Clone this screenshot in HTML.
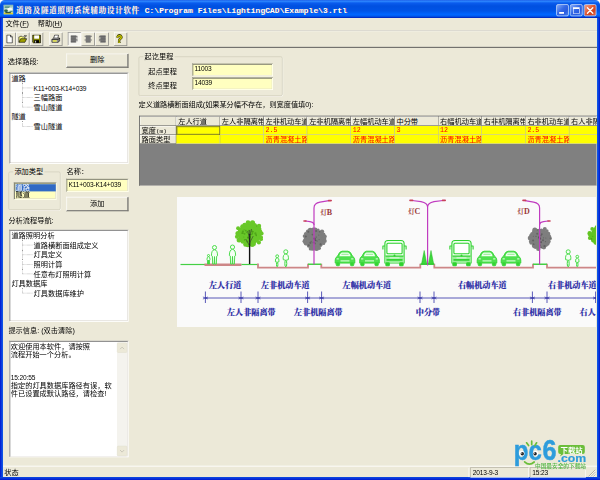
<!DOCTYPE html>
<html lang="zh-CN">
<head>
<meta charset="utf-8">
<title>道路及隧道照明系统辅助设计软件</title>
<style>
html,body{margin:0;padding:0;width:600px;height:480px;overflow:hidden;background:#ECE9D8;}
#stage{position:absolute;left:0;top:0;width:600px;height:480px;overflow:hidden;background:#ECE9D8;}
#win{position:absolute;left:0;top:0;width:1000px;height:800px;transform:scale(0.6) translateZ(0);transform-origin:0 0;
  font-family:"Liberation Sans","Noto Sans CJK SC","WenQuanYi Zen Hei",sans-serif;font-size:12px;color:#000;line-height:16px;}
#win div,#win span{position:absolute;box-sizing:border-box;white-space:nowrap;}
/* frame */
#tb{left:0;top:0;width:1000px;height:30px;border-radius:8px 8px 0 0;background:linear-gradient(#1C5CE6 0,#2E88FF 2px,#0A5CEE 5px,#0050E0 10px,#0054E6 18px,#0066FF 24px,#005AEE 27px,#0030C8 29px,#0028B8 30px);}
#bl{left:0;top:30px;width:5px;height:770px;background:linear-gradient(90deg,#0019CF,#0831D9 40%,#1058E8 75%,#0A48DD);}
#br{left:995px;top:30px;width:5px;height:770px;background:linear-gradient(90deg,#0A48DD,#1058E8 25%,#0831D9 60%,#0019CF);}
#bb{left:0;top:794.5px;width:1000px;height:5.5px;background:linear-gradient(#0C4CE0,#0831D9 55%,#0019CF);}
#ttl{left:27px;top:8.5px;height:18px;line-height:18px;font-size:13.5px;font-weight:bold;color:#fff;font-family:"Liberation Mono","Noto Serif CJK SC",serif;letter-spacing:0.2px;text-shadow:1px 1px 0 #0A1883,0.5px 0 0 #fff;}
.cb{top:7px;width:21px;height:20px;border:1px solid #fff;border-radius:3px;background:linear-gradient(135deg,#86ACF8,#3468E6 45%,#2A5CE0 70%,#4A82F0);}
/* 3d */
.sunk{border:1px solid;border-color:#808080 #fff #fff #808080;box-shadow:inset 1px 1px 0 #404040,inset -1px -1px 0 #D4D0C8;}
.btn{border:1px solid;border-color:#fff #404040 #404040 #fff;box-shadow:inset -1px -1px 0 #808080,inset 1px 1px 0 #F4F2EA;background:#ECE9D8;text-align:center;}
.grp{border:1px solid #CBC8B6;border-radius:3px;box-shadow:1px 1px 0 #FBFAF6;}
.grp>span{top:-9px;background:#ECE9D8;padding:0 2px;color:#000;}
.white{background:#fff;}
.ye{background:#FFFFC0;}
.ti{left:0;height:16px;line-height:16px;margin-top:-1.5px;}
.lat{position:static !important;font-size:11px;letter-spacing:-0.25px;}
.tl{border-left:1px dotted #9A9A9A;margin-top:-2px;}
.th{border-top:1px dotted #9A9A9A;height:1px;margin-top:-2px;}
/* grid */
#grid{left:232px;top:193px;width:763px;height:117px;background:#808080;border:1px solid;border-color:#606060 #D4D0C8 #D4D0C8 #606060;overflow:hidden;}
.hc{background:#ECE9D8;border-right:1px solid #6A6A6A;border-bottom:1px solid #6A6A6A;box-shadow:inset 1px 1px 0 #fff;overflow:hidden;padding-left:3px;height:16px;line-height:17px;}
.yc{background:#FFFF00;border-right:1px solid #C0C0C0;border-bottom:1px solid #C0C0C0;overflow:hidden;padding-left:3px;height:15px;line-height:14px;color:#FF0000;}
.sb{border:1px solid;border-color:#ACA899 #fff #fff #ACA899;height:17px;top:1px;line-height:15px;padding-left:3px;}
</style>
</head>
<body>
<div id="stage">
<div id="win">
  <!-- title bar -->
  <div style="left:0;top:0;width:1000px;height:12px;background:#fff;"></div><div id="tb"></div>
  <div id="ticon" style="left:6px;top:8px;width:16px;height:16px;background:#B9D9CC;overflow:hidden;">
    <div style="left:0;top:0;width:16px;height:3px;background:#8DBDB6;"></div>
    <div style="left:2px;top:3px;width:8px;height:2px;background:#3F8274;transform:skewX(-35deg);"></div>
    <div style="left:6px;top:5px;width:9px;height:5px;background:#F6FBF8;border-radius:50%;"></div>
    <div style="left:1px;top:8px;width:6px;height:4px;background:#2F6447;border-radius:40%;"></div>
    <div style="left:10px;top:10px;width:5px;height:2px;background:#5A9484;"></div>
    <div style="left:0;top:13px;width:16px;height:3px;background:#DDD02A;"></div>
    <div style="left:3px;top:12px;width:9px;height:1.5px;background:#34503A;"></div>
  </div>
  <div id="ttl"><span style="position:static;font-size:12.4px;letter-spacing:1.35px;">道路及隧道照明系统辅助设计软件</span><span style="position:static;font-size:13.4px;letter-spacing:0;white-space:pre;"> C:\Program Files\LightingCAD\Example\3.rtl</span></div>
  <div class="cb" style="left:927px;"><div style="left:4px;top:12px;width:8px;height:3px;background:#fff;"></div></div>
  <div class="cb" style="left:950px;"><div style="left:4px;top:4px;width:11px;height:11px;border:1px solid #fff;border-top-width:3px;"></div></div>
  <div class="cb" style="left:973px;background:linear-gradient(135deg,#F4A890,#E25A34 45%,#D0421E 70%,#E87050);">
    <svg style="position:absolute;left:3px;top:3px" width="13" height="13" viewBox="0 0 13 13"><path d="M2 2L11 11M11 2L2 11" stroke="#fff" stroke-width="2.2" stroke-linecap="round"/></svg></div>
  <div id="bl"></div><div id="br"></div><div id="bb"></div>

  <!-- menu -->
  <div style="left:9px;top:32px;">文件(<u>F</u>)</div>
  <div style="left:63px;top:32px;">帮助(<u>H</u>)</div>
  <div style="left:5px;top:50px;width:990px;height:1px;background:#ACA899;"></div>
  <div style="left:5px;top:51px;width:990px;height:1px;background:#fff;"></div>
  <!-- toolbar placeholder -->
  <div id="tbar" style="left:5px;top:52px;width:990px;height:26px;"><div style="left:2px;top:2px;width:19px;height:22px;border:1px solid;border-color:#fff #707070 #707070 #fff;"><svg style="position:absolute;left:0px;top:2px" width="16" height="16" viewBox="0 0 16 16"><path d="M3.5 1.5H9.5L12.5 4.5V14.5H3.5Z" fill="#fff" stroke="#000"/><path d="M9.5 1.5V4.5H12.5" fill="none" stroke="#000"/></svg></div><div style="left:22px;top:2px;width:22px;height:22px;border:1px solid;border-color:#fff #707070 #707070 #fff;"><svg style="position:absolute;left:2px;top:2px" width="16" height="16" viewBox="0 0 16 16"><path d="M1.5 13.5V4.5H2.5L3.5 3.5H6.5L7.5 4.5H11.5V7.5" fill="#FFFF80" stroke="#000"/><path d="M1.5 13.5L4.5 7.5H14.5L11.5 13.5Z" fill="#A0A000" stroke="#000"/><path d="M10 2.5Q12.5 1 13.5 3.5M13.5 3.5L14.2 1.6M13.5 3.5L11.6 3.6" fill="none" stroke="#000" stroke-width="0.9"/></svg></div><div style="left:45px;top:2px;width:22px;height:22px;border:1px solid;border-color:#fff #707070 #707070 #fff;"><svg style="position:absolute;left:2px;top:2px" width="16" height="16" viewBox="0 0 16 16"><path d="M1.5 1.5H14.5V14.5H2.5L1.5 13.5Z" fill="#808000" stroke="#000"/><rect x="4" y="2" width="8" height="5.5" fill="#fff"/><rect x="4" y="10" width="8" height="4.5" fill="#000"/><rect x="5.2" y="11" width="2" height="3" fill="#C0C0C0"/></svg></div><div style="left:77px;top:2px;width:22px;height:22px;border:1px solid;border-color:#fff #707070 #707070 #fff;"><svg style="position:absolute;left:2px;top:2px" width="16" height="16" viewBox="0 0 16 16"><path d="M4.5 6.5L6 1.5H12.5L11.5 6.5" fill="#fff" stroke="#000"/><path d="M1.5 9L4 6.5H14.5L12 9Z" fill="#C0C0C0" stroke="#000"/><path d="M1.5 9H12V13.5H1.5Z" fill="#C0C0C0" stroke="#000"/><path d="M12 9L14.5 6.5V11L12 13.5" fill="#808080" stroke="#000"/><rect x="3" y="10.5" width="6.5" height="1.6" fill="#FFFF00"/></svg></div><div style="left:108px;top:2px;width:22px;height:22px;border:1px solid;border-color:#808080 #fff #fff #808080;background:#F7F6F0;"><svg style="position:absolute;left:2px;top:2px" width="16" height="16" viewBox="0 0 16 16"><rect x="2" y="2" width="9" height="12" fill="#808080"/><path d="M2 3.5H13M2 6.5H10M2 9.5H13M2 12.5H10" stroke="#606060" stroke-width="1.6"/><path d="M11 5H13.5M11 8H13.5M11 11H13.5" stroke="#808080" stroke-width="1.4"/></svg></div><div style="left:131px;top:2px;width:22px;height:22px;border:1px solid;border-color:#fff #707070 #707070 #fff;"><svg style="position:absolute;left:2px;top:2px" width="16" height="16" viewBox="0 0 16 16"><rect x="4" y="2" width="8" height="12" fill="#808080"/><path d="M2 3.5H14M4 6.5H12M2 9.5H14M4 12.5H12" stroke="#707070" stroke-width="1.7"/></svg></div><div style="left:154px;top:2px;width:22px;height:22px;border:1px solid;border-color:#fff #707070 #707070 #fff;"><svg style="position:absolute;left:2px;top:2px" width="16" height="16" viewBox="0 0 16 16"><rect x="5" y="2" width="9" height="12" fill="#808080"/><path d="M3 3.5H14M6 6.5H14M3 9.5H14M6 12.5H14" stroke="#606060" stroke-width="1.6"/><path d="M2.5 5H5M2.5 8H5M2.5 11H5" stroke="#808080" stroke-width="1.4"/></svg></div><div style="left:185px;top:2px;width:22px;height:22px;border:1px solid;border-color:#fff #707070 #707070 #fff;"><div style="left:-2px;top:1px;width:20px;height:20px;line-height:20px;text-align:center;font-family:'Liberation Sans',sans-serif;font-weight:bold;font-size:17px;color:#C8C800;text-shadow:1px 0 0 #404000,-1px 0 0 #404000,0 1px 0 #404000,0 -1px 0 #404000;">?</div></div></div>
  <div style="left:5px;top:78px;width:990px;height:1px;background:#808080;"></div>
  <div style="left:5px;top:79px;width:990px;height:1px;background:#404040;"></div>

  <!-- LEFT PANEL -->
  <div style="left:13px;top:94px;">选择路段:</div>
  <div class="btn" style="left:110px;top:89px;width:104px;height:24px;line-height:21px;">删除</div>
  <div id="tree1" class="sunk white" style="left:15px;top:121px;width:199px;height:152px;"><div class="ti" style="left:3px;top:2px;">道路</div><div class="ti" style="left:40px;top:18px;"><span class="lat">K11+003-K14+039</span></div><div class="th" style="left:21px;top:26px;width:17px;"></div><div class="tl" style="left:21px;top:18px;width:1px;height:16px;"></div><div class="ti" style="left:40px;top:34px;">三幅路面</div><div class="th" style="left:21px;top:42px;width:17px;"></div><div class="tl" style="left:21px;top:34px;width:1px;height:16px;"></div><div class="ti" style="left:40px;top:50px;">雪山隧道</div><div class="th" style="left:21px;top:58px;width:17px;"></div><div class="tl" style="left:21px;top:50px;width:1px;height:8px;"></div><div class="ti" style="left:3px;top:66px;">隧道</div><div class="ti" style="left:40px;top:82px;">雪山隧道</div><div class="th" style="left:21px;top:90px;width:17px;"></div><div class="tl" style="left:21px;top:82px;width:1px;height:8px;"></div></div>

  <div class="grp" style="left:14px;top:286px;width:87px;height:64px;"><span style="left:7px;">添加类型</span></div>
  <div id="lb" class="sunk ye" style="left:23px;top:304px;width:71px;height:29px;">
    <div style="left:2px;top:2px;width:67px;height:12px;line-height:12px;background:#316AC5;color:#fff;">道路</div>
    <div style="left:2px;top:14px;width:67px;height:12px;line-height:12px;">隧道</div>
  </div>
  <div style="left:111px;top:278px;">名称：</div>
  <div class="sunk ye" style="left:110px;top:298px;width:104px;height:22px;line-height:17px;padding-left:3px;"><span class="lat">K11+003-K14+039</span></div>
  <div class="btn" style="left:110px;top:328px;width:104px;height:24px;line-height:21px;">添加</div>

  <div style="left:14px;top:359px;">分析流程导航:</div>
  <div id="tree2" class="sunk white" style="left:15px;top:383px;width:199px;height:153px;"><div class="ti" style="left:3px;top:2px;">道路照明分析</div><div class="ti" style="left:40px;top:18px;">道路横断面组成定义</div><div class="th" style="left:21px;top:26px;width:17px;"></div><div class="tl" style="left:21px;top:18px;width:1px;height:16px;"></div><div class="ti" style="left:40px;top:34px;">灯具定义</div><div class="th" style="left:21px;top:42px;width:17px;"></div><div class="tl" style="left:21px;top:34px;width:1px;height:16px;"></div><div class="ti" style="left:40px;top:50px;">照明计算</div><div class="th" style="left:21px;top:58px;width:17px;"></div><div class="tl" style="left:21px;top:50px;width:1px;height:16px;"></div><div class="ti" style="left:40px;top:66px;">任意布灯照明计算</div><div class="th" style="left:21px;top:74px;width:17px;"></div><div class="tl" style="left:21px;top:66px;width:1px;height:8px;"></div><div class="ti" style="left:3px;top:82px;">灯具数据库</div><div class="ti" style="left:40px;top:98px;">灯具数据库维护</div><div class="th" style="left:21px;top:106px;width:17px;"></div><div class="tl" style="left:21px;top:98px;width:1px;height:8px;"></div></div>

  <div style="left:14px;top:543px;">提示信息: (双击清除)</div>
  <div id="msg" class="sunk white" style="left:15px;top:568px;width:199px;height:194px;"><div style="left:2px;top:3px;height:13px;line-height:13px;">欢迎使用本软件，请按照</div><div style="left:2px;top:16px;height:13px;line-height:13px;">流程开始一个分析。</div><div style="left:2px;top:55px;height:13px;line-height:13px;"><span class="lat">15:20:55</span></div><div style="left:2px;top:68px;height:13px;line-height:13px;">指定的灯具数据库路径有误，软</div><div style="left:2px;top:81px;height:13px;line-height:13px;">件已设置成默认路径，请检查!</div><div style="left:179px;top:2px;width:17px;height:189px;background:#F4F3EE;"></div><div style="left:179px;top:2px;width:17px;height:17px;background:#ECE9D8;border:1px solid #E3E0D0;border-radius:2px;color:#C9C7BA;font-size:10px;line-height:14px;text-align:center;"><svg width="9" height="6" viewBox="0 0 9 6" style="position:absolute;left:3px;top:5px"><path d="M1 5L4.5 1.5L8 5" fill="none" stroke="#C9C7BA" stroke-width="1.6"/></svg></div><div style="left:179px;top:174px;width:17px;height:17px;background:#ECE9D8;border:1px solid #E3E0D0;border-radius:2px;"><svg width="9" height="6" viewBox="0 0 9 6" style="position:absolute;left:3px;top:5px"><path d="M1 1L4.5 4.5L8 1" fill="none" stroke="#C9C7BA" stroke-width="1.6"/></svg></div></div>

  <!-- RIGHT PANEL -->
  <div class="grp" style="left:231px;top:94px;width:240px;height:66px;"><span style="left:7px;">起讫里程</span></div>
  <div style="left:247px;top:111px;">起点里程</div>
  <div style="left:247px;top:134px;">终点里程</div>
  <div class="sunk ye" style="left:320px;top:106px;width:135px;height:21px;line-height:15px;padding-left:3px;"><span class="lat">11003</span></div>
  <div class="sunk ye" style="left:320px;top:129px;width:135px;height:21px;line-height:15px;padding-left:3px;"><span class="lat">14039</span></div>
  <div style="left:231px;top:167px;letter-spacing:-0.1px;">定义道路横断面组成(如果某分幅不存在，则宽度值填0):</div>

  <div id="grid"><div class="hc" style="left:0;top:0;width:61px;"></div><div class="hc" style="left:0;top:16px;width:61px;height:15px;line-height:14px;">宽度<span style="position:static;font-family:'Liberation Mono',monospace;font-size:10px;">(m)</span></div><div class="hc" style="left:0;top:31px;width:61px;height:15px;line-height:14px;">路面类型</div><div class="hc" style="left:61.0px;top:0;width:72.75px;">左人行道</div><div class="yc" style="left:61.0px;top:16px;width:72.75px;font-family:'Liberation Mono',monospace;font-size:11px;border:1px solid #505030;box-shadow:inset 0 0 0 1px #A0A040;"></div><div class="yc" style="left:61.0px;top:31px;width:72.75px;"></div><div class="hc" style="left:133.75px;top:0;width:72.75px;">左人非隔离带</div><div class="yc" style="left:133.75px;top:16px;width:72.75px;font-family:'Liberation Mono',monospace;font-size:11px;"></div><div class="yc" style="left:133.75px;top:31px;width:72.75px;"></div><div class="hc" style="left:206.5px;top:0;width:72.75px;">左非机动车道</div><div class="yc" style="left:206.5px;top:16px;width:72.75px;font-family:'Liberation Mono',monospace;font-size:11px;">2.5</div><div class="yc" style="left:206.5px;top:31px;width:72.75px;">沥青混凝土路面</div><div class="hc" style="left:279.25px;top:0;width:72.75px;">左非机隔离带</div><div class="yc" style="left:279.25px;top:16px;width:72.75px;font-family:'Liberation Mono',monospace;font-size:11px;"></div><div class="yc" style="left:279.25px;top:31px;width:72.75px;"></div><div class="hc" style="left:352.0px;top:0;width:72.75px;">左幅机动车道</div><div class="yc" style="left:352.0px;top:16px;width:72.75px;font-family:'Liberation Mono',monospace;font-size:11px;">12</div><div class="yc" style="left:352.0px;top:31px;width:72.75px;">沥青混凝土路面</div><div class="hc" style="left:424.75px;top:0;width:72.75px;">中分带</div><div class="yc" style="left:424.75px;top:16px;width:72.75px;font-family:'Liberation Mono',monospace;font-size:11px;">3</div><div class="yc" style="left:424.75px;top:31px;width:72.75px;"></div><div class="hc" style="left:497.5px;top:0;width:72.75px;">右幅机动车道</div><div class="yc" style="left:497.5px;top:16px;width:72.75px;font-family:'Liberation Mono',monospace;font-size:11px;">12</div><div class="yc" style="left:497.5px;top:31px;width:72.75px;">沥青混凝土路面</div><div class="hc" style="left:570.25px;top:0;width:72.75px;">右非机隔离带</div><div class="yc" style="left:570.25px;top:16px;width:72.75px;font-family:'Liberation Mono',monospace;font-size:11px;"></div><div class="yc" style="left:570.25px;top:31px;width:72.75px;"></div><div class="hc" style="left:643.0px;top:0;width:72.75px;">右非机动车道</div><div class="yc" style="left:643.0px;top:16px;width:72.75px;font-family:'Liberation Mono',monospace;font-size:11px;">2.5</div><div class="yc" style="left:643.0px;top:31px;width:72.75px;">沥青混凝土路面</div><div class="hc" style="left:715.75px;top:0;width:72.75px;">右人非隔离带</div><div class="yc" style="left:715.75px;top:16px;width:72.75px;font-family:'Liberation Mono',monospace;font-size:11px;"></div><div class="yc" style="left:715.75px;top:31px;width:72.75px;"></div></div>

  <!-- status bar -->
  <div id="status" style="left:5px;top:776px;width:990px;height:19px;border-top:2px solid #FAF9F4;">
    <div class="sb" style="left:0;width:777px;border-color:transparent #fff transparent transparent;padding-left:1px;">状态</div>
    <div class="sb" style="left:779px;width:97px;"><span class="lat">2013-9-3</span></div>
    <div class="sb" style="left:878px;width:93px;"><span class="lat">15:23</span></div>
    <svg style="position:absolute;left:974px;top:3px" width="14" height="14" viewBox="0 0 14 14"><path d="M13 2L2 13M13 6L6 13M13 10L10 13" stroke="#ACA899" stroke-width="1.4"/><path d="M14 3L3 14M14 7L7 14M14 11L11 14" stroke="#fff" stroke-width="1"/></svg>
  </div>
</div>
<!--DIA--><svg id="dia" style="position:absolute;left:177px;top:197px" width="419" height="129.5" viewBox="177 197 419 129.5">
<rect x="177" y="197" width="419" height="130" fill="#FAFAFA"/>
<path d="M180.5 264.5H205" stroke="#44D044" stroke-width="1.2" fill="none"/>
<path d="M204.5 264.7H241.5" stroke="#CD8687" stroke-width="2.5" fill="none"/>
<path d="M241.5 264.5H258" stroke="#44D044" stroke-width="1.2" fill="none"/>
<path d="M258 263.5V267.6H308V263.8 M321.3 263.8V267.6H420.3V263.8 M434.3 263.8V267.6H533V263.8 M547 263.8V267.6H596" stroke="#CD8687" stroke-width="1.8" fill="none"/>
<path d="M308 264.2H321.3 M420.3 264.2H434.3 M533 264.2H547" stroke="#44D044" stroke-width="1.4" fill="none"/>
<ellipse cx="249.6" cy="234" rx="11.9" ry="10.5" fill="#68C828"/><circle cx="261.6" cy="233.4" r="2.0" fill="#68C828"/><circle cx="261.3" cy="237.3" r="1.7" fill="#68C828"/><circle cx="261.1" cy="239.2" r="1.9" fill="#68C828"/><circle cx="258.9" cy="242.4" r="2.1" fill="#68C828"/><circle cx="253.8" cy="243.7" r="2.2" fill="#68C828"/><circle cx="252.2" cy="244.6" r="2.5" fill="#68C828"/><circle cx="247.8" cy="245.0" r="2.3" fill="#68C828"/><circle cx="245.4" cy="244.5" r="2.2" fill="#68C828"/><circle cx="243.0" cy="241.2" r="2.5" fill="#68C828"/><circle cx="239.1" cy="240.0" r="2.5" fill="#68C828"/><circle cx="236.9" cy="236.8" r="2.0" fill="#68C828"/><circle cx="237.9" cy="233.4" r="2.5" fill="#68C828"/><circle cx="239.6" cy="230.7" r="1.7" fill="#68C828"/><circle cx="238.1" cy="228.3" r="2.0" fill="#68C828"/><circle cx="242.4" cy="226.3" r="2.1" fill="#68C828"/><circle cx="244.6" cy="224.9" r="2.2" fill="#68C828"/><circle cx="248.0" cy="222.6" r="2.3" fill="#68C828"/><circle cx="252.5" cy="222.9" r="2.6" fill="#68C828"/><circle cx="254.5" cy="225.4" r="2.5" fill="#68C828"/><circle cx="259.0" cy="226.0" r="2.2" fill="#68C828"/><circle cx="259.1" cy="229.1" r="2.4" fill="#68C828"/><circle cx="260.5" cy="231.3" r="1.7" fill="#68C828"/><circle cx="256.6" cy="226.0" r="0.6" fill="#3E8E10" opacity="0.55"/><circle cx="251.1" cy="230.0" r="0.6" fill="#3E8E10" opacity="0.55"/><circle cx="247.2" cy="241.6" r="1.0" fill="#3E8E10" opacity="0.55"/><circle cx="256.5" cy="235.7" r="0.5" fill="#3E8E10" opacity="0.55"/><circle cx="248.8" cy="230.7" r="1.0" fill="#3E8E10" opacity="0.55"/><circle cx="255.4" cy="233.4" r="1.1" fill="#3E8E10" opacity="0.55"/><circle cx="249.3" cy="234.7" r="0.9" fill="#3E8E10" opacity="0.55"/><circle cx="251.8" cy="234.4" r="0.7" fill="#3E8E10" opacity="0.55"/><circle cx="248.2" cy="233.0" r="0.5" fill="#3E8E10" opacity="0.55"/><circle cx="252.1" cy="231.6" r="1.1" fill="#3E8E10" opacity="0.55"/><circle cx="253.1" cy="231.7" r="0.8" fill="#3E8E10" opacity="0.55"/><circle cx="242.2" cy="233.2" r="0.9" fill="#3E8E10" opacity="0.55"/><circle cx="242.9" cy="231.7" r="1.1" fill="#3E8E10" opacity="0.55"/><circle cx="244.6" cy="233.8" r="0.9" fill="#3E8E10" opacity="0.55"/><circle cx="249.9" cy="237.1" r="1.1" fill="#3E8E10" opacity="0.55"/><circle cx="243.3" cy="233.3" r="0.5" fill="#3E8E10" opacity="0.55"/><circle cx="243.8" cy="237.0" r="0.5" fill="#3E8E10" opacity="0.55"/><circle cx="244.1" cy="229.7" r="0.5" fill="#3E8E10" opacity="0.55"/><circle cx="245.8" cy="230.6" r="0.9" fill="#3E8E10" opacity="0.55"/><circle cx="244.7" cy="239.8" r="0.9" fill="#3E8E10" opacity="0.55"/><circle cx="250.3" cy="234.1" r="0.9" fill="#3E8E10" opacity="0.55"/><circle cx="252.4" cy="233.4" r="0.8" fill="#3E8E10" opacity="0.55"/><circle cx="246.5" cy="232.2" r="0.7" fill="#3E8E10" opacity="0.55"/><circle cx="248.0" cy="237.5" r="0.9" fill="#3E8E10" opacity="0.55"/><circle cx="248.2" cy="237.7" r="1.0" fill="#3E8E10" opacity="0.55"/><circle cx="256.1" cy="235.0" r="0.9" fill="#3E8E10" opacity="0.55"/>
<path d="M249.6 264V234" stroke="#111" stroke-width="1.4" fill="none"/><path d="M249.6 244V230 M249.6 246L245.8 239 M249.6 243L253.2 236 M249.6 238L247.6 231 M249.6 236L251.6 229" stroke="#333" stroke-width="0.7" fill="none" opacity="0.8"/>
<ellipse cx="602.5" cy="236" rx="11.9" ry="10.5" fill="#62C422"/><circle cx="615.1" cy="236.3" r="2.4" fill="#62C422"/><circle cx="614.2" cy="240.0" r="2.5" fill="#62C422"/><circle cx="613.0" cy="240.8" r="2.5" fill="#62C422"/><circle cx="610.7" cy="244.9" r="1.7" fill="#62C422"/><circle cx="607.2" cy="244.9" r="2.1" fill="#62C422"/><circle cx="603.8" cy="245.1" r="1.8" fill="#62C422"/><circle cx="601.2" cy="247.5" r="2.4" fill="#62C422"/><circle cx="598.0" cy="246.5" r="1.7" fill="#62C422"/><circle cx="595.2" cy="243.0" r="1.6" fill="#62C422"/><circle cx="592.8" cy="240.6" r="1.8" fill="#62C422"/><circle cx="589.8" cy="238.1" r="1.9" fill="#62C422"/><circle cx="590.5" cy="235.0" r="2.3" fill="#62C422"/><circle cx="589.7" cy="233.4" r="2.3" fill="#62C422"/><circle cx="592.2" cy="228.9" r="1.9" fill="#62C422"/><circle cx="595.1" cy="228.9" r="1.7" fill="#62C422"/><circle cx="596.9" cy="227.3" r="2.2" fill="#62C422"/><circle cx="599.5" cy="225.4" r="1.9" fill="#62C422"/><circle cx="603.8" cy="224.8" r="2.1" fill="#62C422"/><circle cx="607.0" cy="226.4" r="2.3" fill="#62C422"/><circle cx="610.3" cy="226.5" r="1.6" fill="#62C422"/><circle cx="613.7" cy="230.4" r="1.6" fill="#62C422"/><circle cx="613.7" cy="233.7" r="2.2" fill="#62C422"/><circle cx="603.0" cy="236.0" r="0.6" fill="#3E8E10" opacity="0.55"/><circle cx="604.7" cy="235.4" r="1.0" fill="#3E8E10" opacity="0.55"/><circle cx="612.4" cy="231.9" r="0.7" fill="#3E8E10" opacity="0.55"/><circle cx="598.8" cy="240.2" r="1.0" fill="#3E8E10" opacity="0.55"/><circle cx="609.3" cy="240.8" r="1.0" fill="#3E8E10" opacity="0.55"/><circle cx="602.8" cy="235.7" r="1.1" fill="#3E8E10" opacity="0.55"/><circle cx="605.8" cy="237.9" r="0.9" fill="#3E8E10" opacity="0.55"/><circle cx="605.9" cy="234.3" r="1.1" fill="#3E8E10" opacity="0.55"/><circle cx="599.0" cy="235.1" r="0.7" fill="#3E8E10" opacity="0.55"/><circle cx="602.9" cy="236.7" r="0.6" fill="#3E8E10" opacity="0.55"/><circle cx="598.2" cy="226.6" r="0.6" fill="#3E8E10" opacity="0.55"/><circle cx="613.4" cy="239.0" r="0.8" fill="#3E8E10" opacity="0.55"/><circle cx="600.2" cy="237.4" r="0.9" fill="#3E8E10" opacity="0.55"/><circle cx="604.9" cy="231.9" r="0.8" fill="#3E8E10" opacity="0.55"/><circle cx="612.5" cy="239.2" r="0.5" fill="#3E8E10" opacity="0.55"/><circle cx="592.8" cy="236.3" r="0.6" fill="#3E8E10" opacity="0.55"/><circle cx="601.2" cy="226.4" r="0.9" fill="#3E8E10" opacity="0.55"/><circle cx="602.8" cy="234.9" r="0.8" fill="#3E8E10" opacity="0.55"/><circle cx="608.3" cy="243.0" r="0.7" fill="#3E8E10" opacity="0.55"/><circle cx="591.4" cy="239.0" r="1.0" fill="#3E8E10" opacity="0.55"/><circle cx="607.7" cy="235.3" r="0.8" fill="#3E8E10" opacity="0.55"/><circle cx="601.8" cy="231.2" r="0.7" fill="#3E8E10" opacity="0.55"/><circle cx="601.1" cy="236.9" r="0.7" fill="#3E8E10" opacity="0.55"/><circle cx="613.6" cy="235.3" r="0.9" fill="#3E8E10" opacity="0.55"/><circle cx="598.6" cy="236.0" r="0.6" fill="#3E8E10" opacity="0.55"/><circle cx="601.2" cy="243.9" r="1.0" fill="#3E8E10" opacity="0.55"/>
<g stroke="#3CD83C" stroke-width="0.9" fill="#F4FFF4" stroke-linejoin="round">
<circle cx="208.5" cy="255.545" r="1.045"/>
<path d="M206.9325 259.725 Q206.9325 256.78 208.5 256.685 Q210.0675 256.78 210.0675 259.725 L209.59725 260.01 L209.4405 264 L208.65675 264 L208.5 260.2 L208.34325 264 L207.5595 264 L207.40275 260.01 Z"/>
</g>
<g stroke="#3CD83C" stroke-width="0.9" fill="#F4FFF4" stroke-linejoin="round">
<circle cx="214.5" cy="247.535" r="2.035"/>
<path d="M211.4475 255.675 Q211.4475 249.94 214.5 249.755 Q217.5525 249.94 217.5525 255.675 L216.63675 256.23 L216.3315 264 L214.80525 264 L214.5 256.6 L214.19475 264 L212.6685 264 L212.36325 256.23 Z"/>
</g>
<g stroke="#3CD83C" stroke-width="0.9" fill="#F4FFF4" stroke-linejoin="round">
<circle cx="232.5" cy="247.09" r="2.09"/>
<path d="M229.365 255.45 Q229.365 249.56 232.5 249.37 Q235.635 249.56 235.635 255.45 L234.6945 256.02 L234.381 264 L232.8135 264 L232.5 256.4 L232.1865 264 L230.619 264 L230.3055 256.02 Z"/>
</g>
<g stroke="#3CD83C" stroke-width="0.9" fill="#F4FFF4" stroke-linejoin="round">
<circle cx="277.2" cy="256.24" r="1.44"/>
<path d="M275.4 261.76 Q274.95 257.92 277.2 257.8 Q279.45 257.92 279.0 261.76 Q277.2 262.72 275.4 261.76 Z"/>
<ellipse cx="277.2" cy="264.52000000000004" rx="0.7" ry="2.2800000000000002" stroke-width="1"/>
</g>
<g stroke="#3CD83C" stroke-width="0.9" fill="#F4FFF4" stroke-linejoin="round">
<circle cx="285.8" cy="251.84" r="2.04"/>
<path d="M283.25 259.66 Q282.6125 254.22 285.8 254.05 Q288.9875 254.22 288.35 259.66 Q285.8 261.02000000000004 283.25 259.66 Z"/>
<ellipse cx="285.8" cy="263.57" rx="0.969" ry="3.23" stroke-width="1"/>
</g>
<g stroke="#3CD83C" stroke-width="0.9" fill="#F4FFF4" stroke-linejoin="round">
<circle cx="568.2" cy="251.84" r="2.04"/>
<path d="M565.6500000000001 259.66 Q565.0125 254.22 568.2 254.05 Q571.3875 254.22 570.75 259.66 Q568.2 261.02000000000004 565.6500000000001 259.66 Z"/>
<ellipse cx="568.2" cy="263.57" rx="0.969" ry="3.23" stroke-width="1"/>
</g>
<g stroke="#3CD83C" stroke-width="0.9" fill="#F4FFF4" stroke-linejoin="round">
<circle cx="577.3" cy="256.68" r="1.38"/>
<path d="M575.5749999999999 261.97 Q575.14375 258.29 577.3 258.175 Q579.45625 258.29 579.025 261.97 Q577.3 262.89 575.5749999999999 261.97 Z"/>
<ellipse cx="577.3" cy="264.615" rx="0.7" ry="2.185" stroke-width="1"/>
</g>
<ellipse cx="314.4" cy="239" rx="10.5" ry="9.4" fill="#7E7E7E"/><circle cx="324.0" cy="238.7" r="2.3" fill="#7E7E7E"/><circle cx="324.8" cy="240.9" r="2.0" fill="#7E7E7E"/><circle cx="323.7" cy="243.4" r="1.6" fill="#7E7E7E"/><circle cx="320.6" cy="245.3" r="1.7" fill="#7E7E7E"/><circle cx="319.3" cy="248.2" r="1.7" fill="#7E7E7E"/><circle cx="316.5" cy="248.5" r="2.5" fill="#7E7E7E"/><circle cx="312.8" cy="248.1" r="2.6" fill="#7E7E7E"/><circle cx="310.6" cy="248.7" r="1.9" fill="#7E7E7E"/><circle cx="308.7" cy="245.8" r="1.9" fill="#7E7E7E"/><circle cx="305.9" cy="243.2" r="2.2" fill="#7E7E7E"/><circle cx="304.6" cy="241.3" r="2.1" fill="#7E7E7E"/><circle cx="305.1" cy="239.7" r="1.8" fill="#7E7E7E"/><circle cx="304.6" cy="236.1" r="1.9" fill="#7E7E7E"/><circle cx="305.8" cy="233.8" r="1.9" fill="#7E7E7E"/><circle cx="307.7" cy="231.2" r="1.8" fill="#7E7E7E"/><circle cx="310.2" cy="230.3" r="2.5" fill="#7E7E7E"/><circle cx="313.4" cy="230.1" r="2.6" fill="#7E7E7E"/><circle cx="315.1" cy="229.8" r="2.4" fill="#7E7E7E"/><circle cx="318.1" cy="230.2" r="1.6" fill="#7E7E7E"/><circle cx="322.0" cy="231.6" r="2.2" fill="#7E7E7E"/><circle cx="323.2" cy="234.7" r="2.3" fill="#7E7E7E"/><circle cx="324.7" cy="236.5" r="2.1" fill="#7E7E7E"/><circle cx="319.6" cy="231.7" r="0.8" fill="#4A4A4A" opacity="0.55"/><circle cx="314.1" cy="238.5" r="0.9" fill="#4A4A4A" opacity="0.55"/><circle cx="308.3" cy="231.7" r="1.0" fill="#4A4A4A" opacity="0.55"/><circle cx="313.5" cy="242.5" r="0.9" fill="#4A4A4A" opacity="0.55"/><circle cx="319.1" cy="239.6" r="0.6" fill="#4A4A4A" opacity="0.55"/><circle cx="314.8" cy="239.4" r="1.0" fill="#4A4A4A" opacity="0.55"/><circle cx="316.1" cy="240.7" r="0.7" fill="#4A4A4A" opacity="0.55"/><circle cx="315.0" cy="238.5" r="0.8" fill="#4A4A4A" opacity="0.55"/><circle cx="305.8" cy="236.5" r="1.0" fill="#4A4A4A" opacity="0.55"/><circle cx="316.3" cy="237.1" r="0.7" fill="#4A4A4A" opacity="0.55"/><circle cx="308.7" cy="245.3" r="1.1" fill="#4A4A4A" opacity="0.55"/><circle cx="315.5" cy="240.3" r="0.6" fill="#4A4A4A" opacity="0.55"/><circle cx="314.9" cy="243.4" r="0.9" fill="#4A4A4A" opacity="0.55"/><circle cx="314.4" cy="239.0" r="0.8" fill="#4A4A4A" opacity="0.55"/><circle cx="310.4" cy="242.8" r="1.1" fill="#4A4A4A" opacity="0.55"/><circle cx="312.5" cy="234.6" r="0.9" fill="#4A4A4A" opacity="0.55"/><circle cx="314.2" cy="238.6" r="1.0" fill="#4A4A4A" opacity="0.55"/><circle cx="316.1" cy="231.1" r="1.0" fill="#4A4A4A" opacity="0.55"/><circle cx="311.2" cy="241.3" r="0.6" fill="#4A4A4A" opacity="0.55"/><circle cx="314.0" cy="238.6" r="0.5" fill="#4A4A4A" opacity="0.55"/><circle cx="314.8" cy="240.4" r="0.7" fill="#4A4A4A" opacity="0.55"/><circle cx="314.4" cy="239.0" r="0.6" fill="#4A4A4A" opacity="0.55"/><circle cx="317.4" cy="241.0" r="0.5" fill="#4A4A4A" opacity="0.55"/><circle cx="318.8" cy="235.0" r="0.6" fill="#4A4A4A" opacity="0.55"/><circle cx="314.3" cy="242.2" r="0.7" fill="#4A4A4A" opacity="0.55"/><circle cx="320.6" cy="244.4" r="1.1" fill="#4A4A4A" opacity="0.55"/>
<ellipse cx="540" cy="238.5" rx="10.5" ry="9.4" fill="#7E7E7E"/><circle cx="550.2" cy="238.4" r="1.7" fill="#7E7E7E"/><circle cx="548.6" cy="241.4" r="2.1" fill="#7E7E7E"/><circle cx="547.5" cy="243.6" r="2.2" fill="#7E7E7E"/><circle cx="545.9" cy="245.0" r="2.0" fill="#7E7E7E"/><circle cx="543.9" cy="247.1" r="2.3" fill="#7E7E7E"/><circle cx="542.1" cy="247.1" r="1.7" fill="#7E7E7E"/><circle cx="538.3" cy="248.8" r="2.2" fill="#7E7E7E"/><circle cx="535.3" cy="246.6" r="2.3" fill="#7E7E7E"/><circle cx="534.1" cy="245.7" r="2.3" fill="#7E7E7E"/><circle cx="531.1" cy="243.1" r="1.7" fill="#7E7E7E"/><circle cx="530.8" cy="241.4" r="1.9" fill="#7E7E7E"/><circle cx="530.3" cy="238.0" r="2.5" fill="#7E7E7E"/><circle cx="531.2" cy="235.5" r="2.0" fill="#7E7E7E"/><circle cx="532.2" cy="234.0" r="2.0" fill="#7E7E7E"/><circle cx="534.4" cy="231.6" r="2.2" fill="#7E7E7E"/><circle cx="534.8" cy="230.1" r="2.5" fill="#7E7E7E"/><circle cx="538.1" cy="230.4" r="1.7" fill="#7E7E7E"/><circle cx="541.4" cy="230.3" r="1.7" fill="#7E7E7E"/><circle cx="544.8" cy="229.0" r="2.0" fill="#7E7E7E"/><circle cx="546.9" cy="231.0" r="1.7" fill="#7E7E7E"/><circle cx="548.2" cy="233.9" r="2.2" fill="#7E7E7E"/><circle cx="549.2" cy="236.9" r="2.2" fill="#7E7E7E"/><circle cx="538.8" cy="237.6" r="0.7" fill="#4A4A4A" opacity="0.55"/><circle cx="550.2" cy="238.2" r="0.6" fill="#4A4A4A" opacity="0.55"/><circle cx="537.3" cy="230.1" r="0.6" fill="#4A4A4A" opacity="0.55"/><circle cx="539.7" cy="238.2" r="0.7" fill="#4A4A4A" opacity="0.55"/><circle cx="537.2" cy="233.7" r="1.0" fill="#4A4A4A" opacity="0.55"/><circle cx="543.0" cy="240.2" r="1.0" fill="#4A4A4A" opacity="0.55"/><circle cx="536.0" cy="236.4" r="0.7" fill="#4A4A4A" opacity="0.55"/><circle cx="545.9" cy="238.0" r="0.5" fill="#4A4A4A" opacity="0.55"/><circle cx="541.0" cy="235.6" r="0.8" fill="#4A4A4A" opacity="0.55"/><circle cx="541.0" cy="242.5" r="0.7" fill="#4A4A4A" opacity="0.55"/><circle cx="545.5" cy="241.6" r="0.6" fill="#4A4A4A" opacity="0.55"/><circle cx="540.1" cy="238.3" r="1.0" fill="#4A4A4A" opacity="0.55"/><circle cx="541.8" cy="234.2" r="0.9" fill="#4A4A4A" opacity="0.55"/><circle cx="540.1" cy="245.3" r="0.8" fill="#4A4A4A" opacity="0.55"/><circle cx="541.2" cy="247.3" r="0.7" fill="#4A4A4A" opacity="0.55"/><circle cx="533.9" cy="244.2" r="0.7" fill="#4A4A4A" opacity="0.55"/><circle cx="539.1" cy="237.1" r="1.0" fill="#4A4A4A" opacity="0.55"/><circle cx="540.0" cy="239.0" r="1.1" fill="#4A4A4A" opacity="0.55"/><circle cx="544.5" cy="246.2" r="1.1" fill="#4A4A4A" opacity="0.55"/><circle cx="539.9" cy="238.4" r="0.5" fill="#4A4A4A" opacity="0.55"/><circle cx="541.0" cy="242.0" r="0.9" fill="#4A4A4A" opacity="0.55"/><circle cx="543.5" cy="237.8" r="0.6" fill="#4A4A4A" opacity="0.55"/><circle cx="538.7" cy="238.0" r="0.6" fill="#4A4A4A" opacity="0.55"/><circle cx="533.3" cy="236.3" r="0.5" fill="#4A4A4A" opacity="0.55"/><circle cx="533.1" cy="240.4" r="1.0" fill="#4A4A4A" opacity="0.55"/><circle cx="533.3" cy="244.0" r="0.6" fill="#4A4A4A" opacity="0.55"/>
<g stroke="#C03CC0" stroke-width="1.2" fill="none" stroke-linecap="round">
<path d="M314 264V208Q314 203.2 320 202.2L329 200.6"/><path d="M314 224.5Q313.5 222 310 221.6L305.5 221"/>
<path d="M427.6 265V207Q427.6 203 421 201.6L412 200.5 M427.6 207Q427.6 203 434 201.6L443 200.5"/>
<path d="M539.6 264V208Q539.6 203.2 533.6 202.2L525 200.6"/><path d="M539.6 224.5Q540 222 543.5 221.6L548 221"/>
</g>
<g stroke="#C8405A" stroke-width="1.6" stroke-linecap="round"><path d="M328.6 200.6h2.6 M304 221h2 M410 200.4h2.6 M442.6 200.4h2.6 M523 200.4h2.6 M548 221h2"/></g>
<path d="M421.5 264L424.2 250.5L426.8 264Z M428.4 264L431 250.5L433.7 264Z" fill="#3CD83C" stroke="#22B822" stroke-width="0.5"/>
<g stroke="#35D535" stroke-width="0.9" stroke-linejoin="round">
<path d="M335.2 263.1 V260.0 Q335.4 257.3 337.6 256.1 Q339.4 251.3 342 251.2 H348 Q350.6 251.3 352.4 256.1 Q354.6 257.3 354.8 260.0 V263.1 Z" fill="#4FE04F"/>
<path d="M339.4 256.2 Q340.4 252.7 342.2 252.6 H347.8 Q349.6 252.7 350.6 256.2 Z" fill="#EFFFEF" stroke="none"/>
<path d="M341.4 254.3 H348.6" stroke="#7BE87B" stroke-width="0.8"/>
<path d="M340.5 260.9 H349.5" stroke="#D8FFD8" stroke-width="1.1"/>
<path d="M336.6 258.9 h2.2 M351.2 258.9 h2.2" stroke="#E8FFE8" stroke-width="1"/>
<rect x="336.2" y="262.9" width="3.4" height="2.8" rx="0.9" fill="#35D535"/>
<rect x="350.4" y="262.9" width="3.4" height="2.8" rx="0.9" fill="#35D535"/>
</g>
<g stroke="#35D535" stroke-width="0.9" stroke-linejoin="round">
<path d="M359.7 263.1 V260.0 Q359.9 257.3 362.1 256.1 Q363.9 251.3 366.5 251.2 H372.5 Q375.1 251.3 376.9 256.1 Q379.1 257.3 379.3 260.0 V263.1 Z" fill="#4FE04F"/>
<path d="M363.9 256.2 Q364.9 252.7 366.7 252.6 H372.3 Q374.1 252.7 375.1 256.2 Z" fill="#EFFFEF" stroke="none"/>
<path d="M365.9 254.3 H373.1" stroke="#7BE87B" stroke-width="0.8"/>
<path d="M365.0 260.9 H374.0" stroke="#D8FFD8" stroke-width="1.1"/>
<path d="M361.1 258.9 h2.2 M375.7 258.9 h2.2" stroke="#E8FFE8" stroke-width="1"/>
<rect x="360.7" y="262.9" width="3.4" height="2.8" rx="0.9" fill="#35D535"/>
<rect x="374.9" y="262.9" width="3.4" height="2.8" rx="0.9" fill="#35D535"/>
</g>
<g stroke="#35D535" stroke-width="0.9" stroke-linejoin="round">
<path d="M477.2 263.1 V260.0 Q477.4 257.3 479.6 256.1 Q481.4 251.3 484 251.2 H490 Q492.6 251.3 494.4 256.1 Q496.6 257.3 496.8 260.0 V263.1 Z" fill="#4FE04F"/>
<path d="M481.4 256.2 Q482.4 252.7 484.2 252.6 H489.8 Q491.6 252.7 492.6 256.2 Z" fill="#EFFFEF" stroke="none"/>
<path d="M483.4 254.3 H490.6" stroke="#7BE87B" stroke-width="0.8"/>
<path d="M482.5 260.9 H491.5" stroke="#D8FFD8" stroke-width="1.1"/>
<path d="M478.6 258.9 h2.2 M493.2 258.9 h2.2" stroke="#E8FFE8" stroke-width="1"/>
<rect x="478.2" y="262.9" width="3.4" height="2.8" rx="0.9" fill="#35D535"/>
<rect x="492.4" y="262.9" width="3.4" height="2.8" rx="0.9" fill="#35D535"/>
</g>
<g stroke="#35D535" stroke-width="0.9" stroke-linejoin="round">
<path d="M501.2 263.1 V260.0 Q501.4 257.3 503.6 256.1 Q505.4 251.3 508 251.2 H514 Q516.6 251.3 518.4 256.1 Q520.6 257.3 520.8 260.0 V263.1 Z" fill="#4FE04F"/>
<path d="M505.4 256.2 Q506.4 252.7 508.2 252.6 H513.8 Q515.6 252.7 516.6 256.2 Z" fill="#EFFFEF" stroke="none"/>
<path d="M507.4 254.3 H514.6" stroke="#7BE87B" stroke-width="0.8"/>
<path d="M506.5 260.9 H515.5" stroke="#D8FFD8" stroke-width="1.1"/>
<path d="M502.6 258.9 h2.2 M517.2 258.9 h2.2" stroke="#E8FFE8" stroke-width="1"/>
<rect x="502.2" y="262.9" width="3.4" height="2.8" rx="0.9" fill="#35D535"/>
<rect x="516.4" y="262.9" width="3.4" height="2.8" rx="0.9" fill="#35D535"/>
</g>
<g stroke="#2ED22E" stroke-width="1.1" fill="#fff" stroke-linejoin="round">
<path d="M384.9 263.0 V243.5 Q384.9 240.5 388.0 240.5 H401.0 Q404.1 240.5 404.1 243.5 V263.0 Z" fill="#EFFFEF"/>
<rect x="386.9" y="243.2" width="15.2" height="10.5" rx="1" fill="#fff"/>
<path d="M384.9 246.0 H382.9 V249.5 M404.1 246.0 H406.1 V249.5" fill="none"/>
<rect x="385.3" y="255.9" width="18.4" height="7" fill="#9AEE9A" stroke="none"/>
<path d="M385.5 256.1 H403.5" stroke-width="1.2"/>
<path d="M386.5 259.9 H402.5" stroke-width="1.7"/>
<path d="M389.5 257.9 H399.5" stroke="#fff" stroke-width="0.7"/>
<circle cx="394.5" cy="255.5" r="1" fill="#2ED22E" stroke="none"/>
<rect x="385.9" y="262.9" width="3.4" height="2.8" rx="0.8" fill="#2ED22E"/>
<rect x="399.7" y="262.9" width="3.4" height="2.8" rx="0.8" fill="#2ED22E"/>
</g>
<g stroke="#2ED22E" stroke-width="1.1" fill="#fff" stroke-linejoin="round">
<path d="M451.9 263.0 V243.5 Q451.9 240.5 455.0 240.5 H468.0 Q471.1 240.5 471.1 243.5 V263.0 Z" fill="#EFFFEF"/>
<rect x="453.9" y="243.2" width="15.2" height="10.5" rx="1" fill="#fff"/>
<path d="M451.9 246.0 H449.9 V249.5 M471.1 246.0 H473.1 V249.5" fill="none"/>
<rect x="452.3" y="255.9" width="18.4" height="7" fill="#9AEE9A" stroke="none"/>
<path d="M452.5 256.1 H470.5" stroke-width="1.2"/>
<path d="M453.5 259.9 H469.5" stroke-width="1.7"/>
<path d="M456.5 257.9 H466.5" stroke="#fff" stroke-width="0.7"/>
<circle cx="461.5" cy="255.5" r="1" fill="#2ED22E" stroke="none"/>
<rect x="452.9" y="262.9" width="3.4" height="2.8" rx="0.8" fill="#2ED22E"/>
<rect x="466.7" y="262.9" width="3.4" height="2.8" rx="0.8" fill="#2ED22E"/>
</g>
<g font-family="'Liberation Serif','Noto Serif CJK SC',serif" font-weight="bold" font-size="6.3" fill="#9A3838">
<text x="320.4" y="215.2">灯<tspan font-size="8">B</tspan></text><text x="408.2" y="214.4">灯<tspan font-size="8">C</tspan></text><text x="517.6" y="214.4">灯<tspan font-size="8">D</tspan></text></g>
<g stroke="#2E2EA6" stroke-width="0.8" fill="none"><path d="M205.4 298H596"/>
<path d="M205.4 291.5V303 M241 291.5V303 M258 291.5V303 M307.6 291.5V303 M321.6 291.5V303 M420 291.5V303 M434 291.5V303 M532.4 291.5V303 M547 291.5V303 M595.6 291.5V303"/>
<path d="M202.9 297L205.4 298L202.9 299 M207.9 297L205.4 298L207.9 299 M238.5 297L241 298L238.5 299 M243.5 297L241 298L243.5 299 M255.5 297L258 298L255.5 299 M260.5 297L258 298L260.5 299 M305.1 297L307.6 298L305.1 299 M310.1 297L307.6 298L310.1 299 M319.1 297L321.6 298L319.1 299 M324.1 297L321.6 298L324.1 299 M417.5 297L420 298L417.5 299 M422.5 297L420 298L422.5 299 M431.5 297L434 298L431.5 299 M436.5 297L434 298L436.5 299 M529.9 297L532.4 298L529.9 299 M534.9 297L532.4 298L534.9 299 M544.5 297L547 298L544.5 299 M549.5 297L547 298L549.5 299 M593.1 297L595.6 298L593.1 299 M598.1 297L595.6 298L598.1 299" stroke-width="0.7"/></g>
<g font-family="'Liberation Serif','Noto Serif CJK SC',serif" font-weight="900" font-size="8.1" fill="#2E2EA6" stroke="#2E2EA6" stroke-width="0.12">
<text x="209" y="288">左人行道</text>
<text x="261" y="288">左非机动车道</text>
<text x="342.6" y="288">左幅机动车道</text>
<text x="458" y="288">右幅机动车道</text>
<text x="548" y="288">右非机动车道</text>
<text x="227" y="315">左人非隔离带</text>
<text x="294" y="315">左非机隔离带</text>
<text x="415.8" y="315">中分带</text>
<text x="513" y="315">右非机隔离带</text>
<text x="579.6" y="315">右人非隔离带</text>
</g></svg><!--/DIA-->
<!--LOGO--><svg id="logo" style="position:absolute;left:505px;top:430px" width="92" height="40" viewBox="505 430 92 40">
<g font-family="'Liberation Sans',sans-serif" font-weight="bold" fill="#2D9CDC" stroke="#2D9CDC" stroke-width="0.5" stroke-linejoin="round">
<text x="513.8" y="460.2" font-size="27.5" textLength="28" lengthAdjust="spacingAndGlyphs">pc</text>
<text x="542.6" y="460.2" font-size="29" textLength="14" lengthAdjust="spacingAndGlyphs">6</text>
<text x="557.6" y="462.4" font-size="11.6" textLength="28.6" lengthAdjust="spacingAndGlyphs" stroke-width="0.2">.com</text>
</g>
<circle cx="521.8" cy="453.4" r="2.7" fill="#fff"/><circle cx="522.3" cy="453.7" r="1.7" fill="#222"/><circle cx="521.8" cy="453.1" r="0.55" fill="#fff"/>
<circle cx="535.6" cy="453.4" r="2.7" fill="#fff"/><circle cx="535.1" cy="453.7" r="1.7" fill="#222"/><circle cx="534.6" cy="453.1" r="0.55" fill="#fff"/>
<path d="M524.6 461.8Q529.3 466.4 534.2 462" fill="none" stroke="#6BBE3A" stroke-width="1.7" stroke-linecap="round"/>
<path d="M528.6 445.6L526.6 442.8 M531.7 444.6V441.2 M534.8 445.6L536.6 442.8" fill="none" stroke="#6BBE3A" stroke-width="1.7" stroke-linecap="round"/>
<path d="M560.2 445H582.8Q584.8 445 584.8 447V452Q584.8 454 582.8 454H563.5L560 456.6L561 454H560.2Q558.2 454 558.2 452V447Q558.2 445 560.2 445Z" fill="#6BBE3A"/>
<text x="560.6" y="452.6" font-family="'Liberation Sans','Noto Sans CJK SC',sans-serif" font-weight="bold" font-size="7.4" fill="#fff" textLength="22" lengthAdjust="spacingAndGlyphs">下载站</text>
<text x="535" y="467.7" font-family="'Liberation Sans','Noto Sans CJK SC',sans-serif" font-weight="500" font-size="5.7" fill="#55B848" textLength="51" lengthAdjust="spacingAndGlyphs">中国最安全的下载站</text>
</svg><!--/LOGO-->
</div>
</body>
</html>
